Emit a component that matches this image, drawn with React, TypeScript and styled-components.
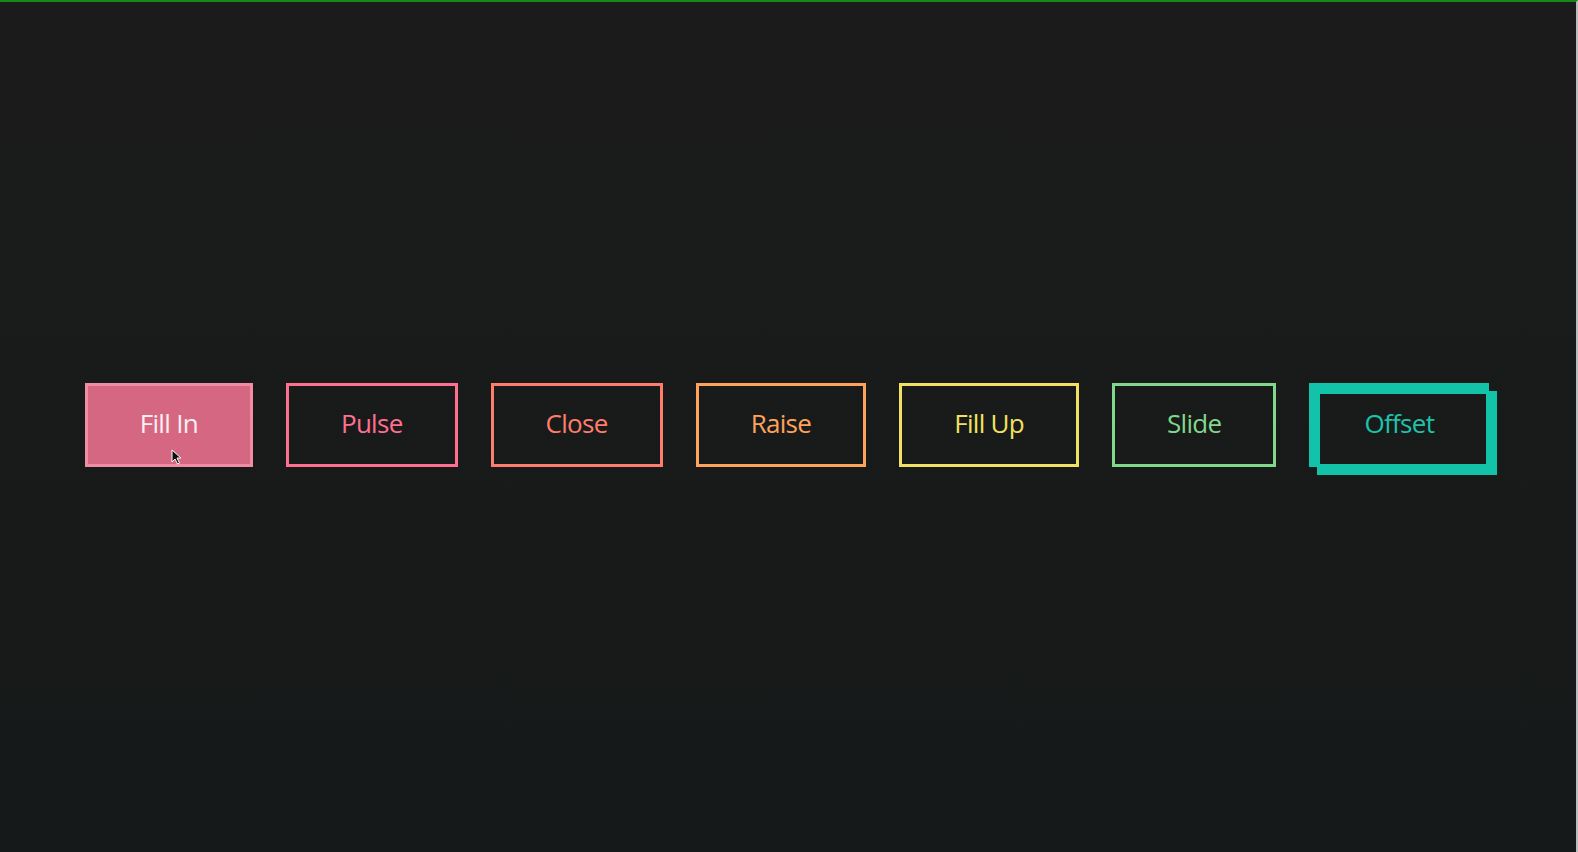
import React from "react";
import styled, { createGlobalStyle, css } from "styled-components";

const GlobalStyle = createGlobalStyle`
  html, body {
    margin: 0;
    padding: 0;
    height: 100%;
  }
  body {
    background: #191a1a;
    font-family: "Open Sans", "Noto Sans", sans-serif;
  }
`;

const Page = styled.div`
  height: 852px;
  box-sizing: border-box;
  border-top: 2px solid #158a17;
  border-right: 2px solid #b9bcbc;
  padding-bottom: 4px;
  background: linear-gradient(to bottom, #1b1b1b, #161919);
  display: flex;
  align-items: center;
  justify-content: center;
`;

const Row = styled.div`
  display: flex;
  align-items: center;
  gap: 33px;
  margin-left: -2px;
`;

type Variant = "fill" | "pulse" | "close" | "raise" | "up" | "slide" | "offset";

const colors: Record<Variant, string> = {
  fill: "#f28ca4",
  pulse: "#ff6f8f",
  close: "#ff7d6d",
  raise: "#ffa35c",
  up: "#f1e061",
  slide: "#80d88b",
  offset: "#12c3aa",
};

const Button = styled.button<{ $variant: Variant }>`
  position: relative;
  box-sizing: border-box;
  height: 84px;
  padding: 0 52px 5px;
  margin: 0;
  background: transparent;
  border: 3px solid ${(p) => colors[p.$variant]};
  color: ${(p) => colors[p.$variant]};
  font-family: "Open Sans", "Noto Sans", sans-serif;
  font-size: 26px;
  font-weight: 500;
  letter-spacing: -0.7px;
  line-height: 1;
  cursor: pointer;

  ${(p) =>
    p.$variant === "fill" &&
    css`
      background: #d66783;
      color: #fbeef1;
    `}

  ${(p) =>
    p.$variant === "offset" &&
    css`
      box-shadow: 8px 8px 0 0 ${colors.offset}, inset 8px 8px 0 0 ${colors.offset};
      color: #1ec2ab;
    `}
`;

const Cursor = styled.svg`
  position: absolute;
  left: 83px;
  top: 63px;
  width: 11px;
  height: 16px;
`;

const buttons: { label: string; variant: Variant }[] = [
  { label: "Fill In", variant: "fill" },
  { label: "Pulse", variant: "pulse" },
  { label: "Close", variant: "close" },
  { label: "Raise", variant: "raise" },
  { label: "Fill Up", variant: "up" },
  { label: "Slide", variant: "slide" },
  { label: "Offset", variant: "offset" },
];

const App = () => {
  return (
    <>
      <GlobalStyle />
      <Page>
        <Row>
          {buttons.map((b) => (
            <Button key={b.variant} $variant={b.variant}>
              {b.label}
              {b.variant === "fill" && (
                <Cursor viewBox="0 0 11 16">
                  <path
                    d="M1 1 L1 13 L4 10 L6.5 15 L8.5 14 L6 9 L10 9 Z"
                    fill="#111"
                    stroke="#fff"
                    strokeWidth="1"
                  />
                </Cursor>
              )}
            </Button>
          ))}
        </Row>
      </Page>
    </>
  );
};

export default App;
